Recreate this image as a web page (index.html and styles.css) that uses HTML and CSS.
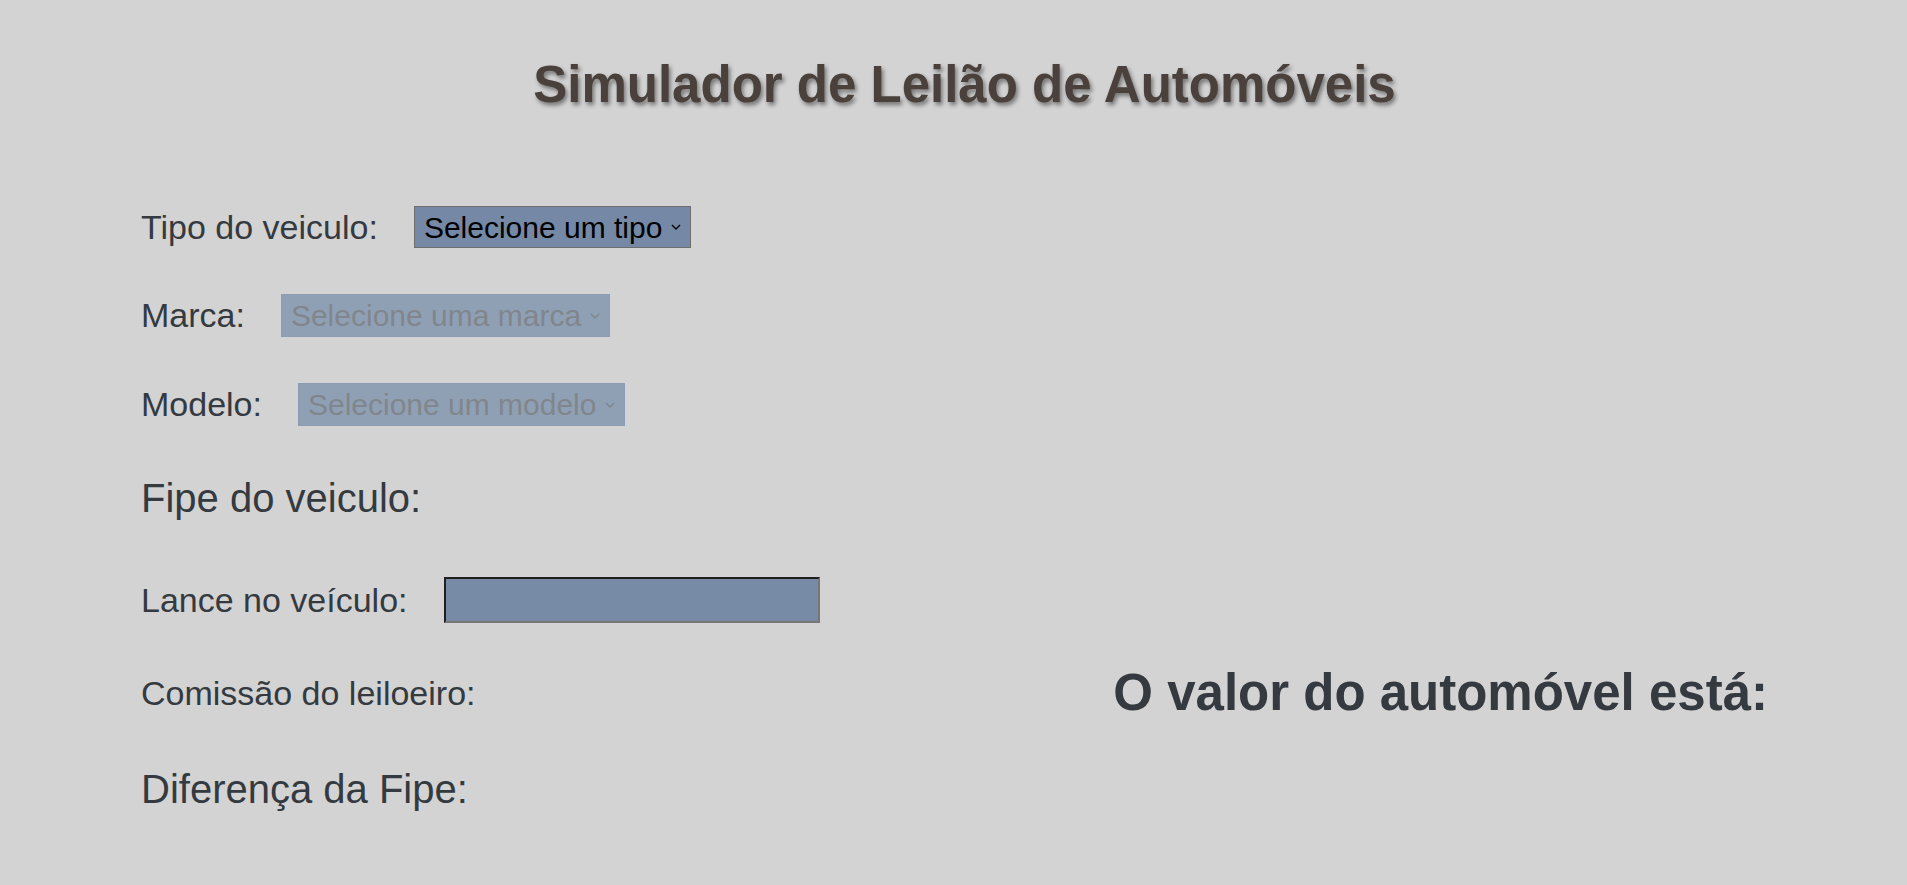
FILE: index.html
```html
<!DOCTYPE html>
<html lang="pt-BR">
<head>
<meta charset="utf-8">
<title>Simulador de Leilão de Automóveis</title>
<link rel="stylesheet" href="styles.css">
</head>
<body>
<header class="header">
  <h1 class="title">Simulador de Leilão de Automóveis</h1>
</header>
<main class="sim">
  <div class="row row-tipo">
    <label class="label" for="tipo">Tipo do veiculo:</label>
    <span class="select-wrap">
      <select id="tipo" class="select select-tipo">
        <option>Selecione um tipo</option>
      </select>
      <svg class="chevron" width="10" height="6" viewBox="0 0 10 6"><path d="M1 1 L5 5 L9 1" fill="none" stroke="currentColor" stroke-width="1.4"/></svg>
    </span>
  </div>
  <div class="row">
    <label class="label" for="marca">Marca:</label>
    <span class="select-wrap is-disabled">
      <select id="marca" class="select select-marca" disabled>
        <option>Selecione uma marca</option>
      </select>
      <svg class="chevron" width="10" height="6" viewBox="0 0 10 6"><path d="M1 1 L5 5 L9 1" fill="none" stroke="currentColor" stroke-width="1.4"/></svg>
    </span>
  </div>
  <div class="row">
    <label class="label" for="modelo">Modelo:</label>
    <span class="select-wrap is-disabled">
      <select id="modelo" class="select select-modelo" disabled>
        <option>Selecione um modelo</option>
      </select>
      <svg class="chevron" width="10" height="6" viewBox="0 0 10 6"><path d="M1 1 L5 5 L9 1" fill="none" stroke="currentColor" stroke-width="1.4"/></svg>
    </span>
  </div>
  <div class="row row-fipe">
    <h2 class="big-label">Fipe do veiculo:</h2>
  </div>
  <div class="row row-lance">
    <label class="label" for="lance">Lance no veículo:</label>
    <input id="lance" class="input" type="text">
  </div>
  <div class="row row-comissao">
    <span class="label">Comissão do leiloeiro:</span>
  </div>
  <h2 class="result">O valor do automóvel está:</h2>
  <div class="row row-diferenca">
    <h2 class="big-label">Diferença da Fipe:</h2>
  </div>
</main>
</body>
</html>
```

FILE: styles.css
```css
* { box-sizing: border-box; }

body {
  margin: 0;
  background: #d3d3d3;
  font-family: "Liberation Sans", Arial, sans-serif;
  color: #343a40;
}

.header {
  padding: 55px 0 92px 22px;
  text-align: center;
}

.title {
  margin: 0;
  font-size: 51px;
  font-weight: bold;
  color: #4a413c;
  text-shadow: 2px 3px 4px rgba(0, 0, 0, 0.45);
}

.sim {
  display: grid;
  grid-template-columns: 1fr auto;
  row-gap: 46px;
  padding: 0 139px 0 141px;
}

.row {
  grid-column: 1;
  display: flex;
  align-items: center;
  gap: 36px;
}

.label {
  font-size: 34px;
  color: #343a40;
}

.big-label {
  margin: 0;
  font-size: 40px;
  font-weight: normal;
  color: #343a40;
}

.row-fipe { margin-top: 4px; }
.row-lance { margin-top: 10px; }
.row-diferenca { margin-top: 4px; }

.select-wrap {
  position: relative;
  display: inline-flex;
  color: #000;
}

.select-wrap.is-disabled { color: #7e858c; }

.select {
  appearance: none;
  -webkit-appearance: none;
  margin: 0;
  height: 42px;
  padding: 0 22px 0 9px;
  font-family: "Liberation Sans", Arial, sans-serif;
  font-size: 30px;
  color: #000;
  background: #7589a6;
  border: 1px solid #6e6e6e;
  border-radius: 0;
}

.select:disabled {
  height: 43px;
  color: #80868c;
  background: #8fa0b5;
  border-color: #8c9db3;
  opacity: 1;
}

.select-tipo { width: 277px; }
.select-marca { width: 329px; }
.select-modelo { width: 327px; }

.chevron {
  position: absolute;
  right: 10px;
  top: 50%;
  margin-top: -3px;
  pointer-events: none;
}

.input {
  width: 376px;
  height: 46px;
  margin: 0;
  background: #778ba6;
  border: 2px solid;
  border-color: #1f1f1f #767676 #767676 #1f1f1f;
  border-radius: 0;
}

.result {
  grid-column: 2;
  grid-row: 6;
  align-self: center;
  margin: 0;
  font-size: 51px;
  line-height: 48px;
  font-weight: bold;
  color: #343a40;
}
```
